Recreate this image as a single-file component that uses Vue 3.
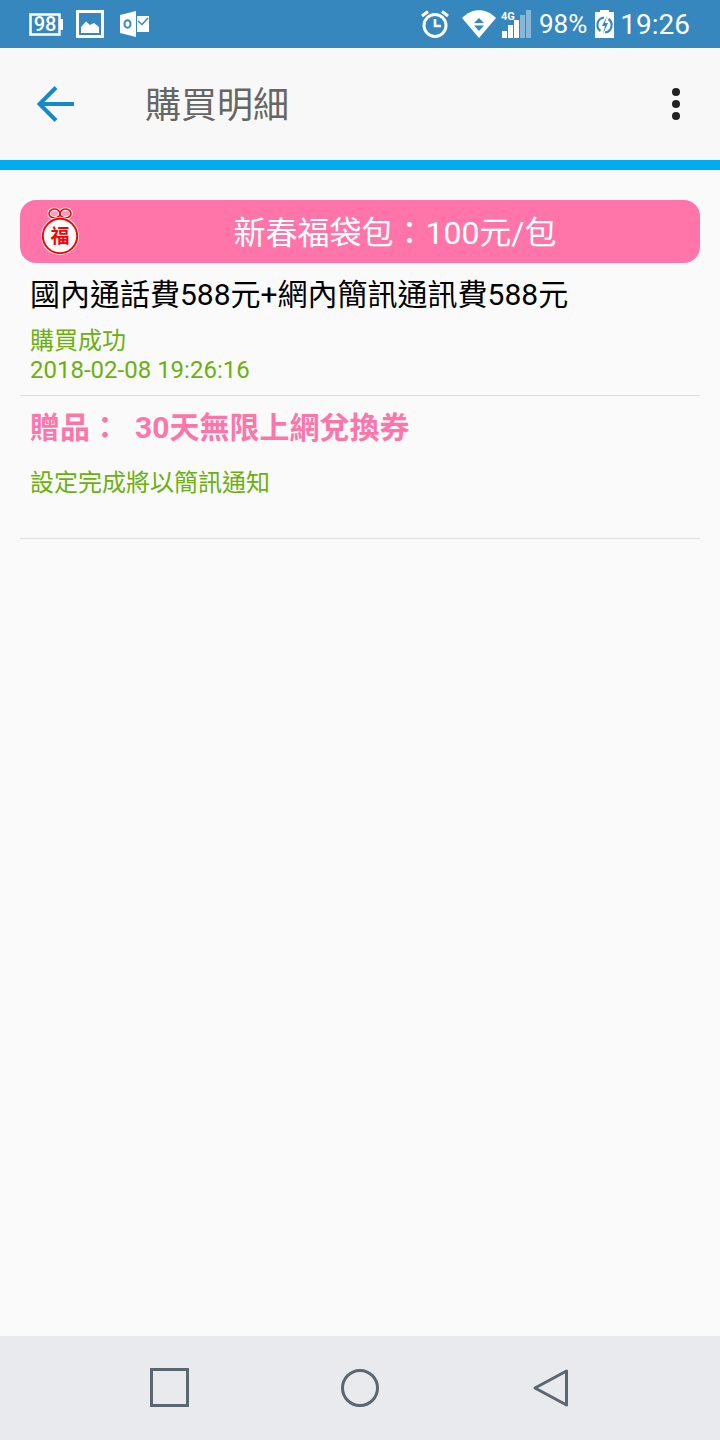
<template>
  <div class="screen">
    <!-- Status bar -->
    <div class="status-bar">
      <div class="status-left">
        <svg class="battery" width="35" height="23" viewBox="0 0 35 23">
          <rect x="1.500" y="1.500" width="29" height="20" fill="none" stroke="#fff" stroke-width="2.500" />
          <rect x="31" y="6" width="3" height="11" fill="#fff" />
          <text x="16" y="18" text-anchor="middle" class="svg-num">98</text>
        </svg>
        <svg class="picture" width="28" height="28" viewBox="0 0 28 28">
          <rect x="1.500" y="1.500" width="25" height="25" fill="none" stroke="#fff" stroke-width="3" />
          <path d="M5 23V17L10 11.500L14 15L18 13L23 17V23Z" fill="#fff" />
        </svg>
        <svg width="29" height="26" viewBox="0 0 29 26">
          <path d="M0 4L16 0V26L0 22Z" fill="#fff" />
          <ellipse cx="7.500" cy="13" rx="3" ry="3.800" fill="none" stroke="#3787bf" stroke-width="2" />
          <rect x="17" y="5" width="12" height="16" fill="#fff" />
          <path d="M18 10L22 13.500L28 7" fill="none" stroke="#3787bf" stroke-width="1.500" />
        </svg>
      </div>
      <div class="status-right">
        <svg class="alarm" width="30" height="30" viewBox="0 0 30 30">
          <circle cx="15" cy="16.500" r="11" fill="none" stroke="#fff" stroke-width="3" />
          <path d="M15 10V17H21" fill="none" stroke="#fff" stroke-width="2.600" />
          <path d="M2 7L8 2.500M28 7L22 2.500" stroke="#fff" stroke-width="3" />
        </svg>
        <svg class="wifi" width="34" height="28" viewBox="0 0 34 28">
          <path d="M0 8C10 -2.500 24 -2.500 34 8L17 28Z" fill="#fff" />
          <path d="M17 8L22 13H12ZM17 21L12 15.500H22Z" fill="#3787bf" />
        </svg>
        <svg class="signal" width="29" height="28" viewBox="0 0 29 28">
          <text x="-1" y="9.500" class="svg-4g">4G</text>
          <rect x="0" y="21" width="5" height="7" fill="#fff" />
          <rect x="6" y="15" width="5" height="13" fill="#fff" />
          <rect x="12" y="10" width="5" height="18" fill="#fff" />
          <rect x="18" y="5" width="5" height="23" fill="#fff" opacity="0.4" />
          <rect x="24" y="0" width="5" height="28" fill="#fff" opacity="0.4" />
        </svg>
        <span class="percent">98%</span>
        <svg class="charge" width="19" height="28" viewBox="0 0 19 28">
          <path d="M5 0H14V2H19V28H0V2H5Z" fill="#fff" />
          <path d="M5.500 21A7.500 7.500 0 0 1 9 7.500M13.500 9A7.500 7.500 0 0 1 10 22.500" fill="none" stroke="#3787bf" stroke-width="2.200" />
          <path d="M12 6L7 16H10L8 24L13 13H10Z" fill="#3787bf" />
        </svg>
        <span class="clock">19:26</span>
      </div>
    </div>

    <!-- App bar -->
    <header class="app-bar">
      <svg class="back" width="38" height="36" viewBox="0 0 38 36">
        <path d="M37 18H3M19 1.500L2.500 18L19 34.500" fill="none" stroke="#148ac8" stroke-width="4" />
      </svg>
      <h1 class="title">購買明細</h1>
      <div class="more">
        <i /><i /><i />
      </div>
    </header>

    <!-- Content -->
    <main class="content">
      <div class="banner">
        <svg class="bag" width="40" height="50" viewBox="0 0 40 50">
          <ellipse cx="14.500" cy="6.500" rx="5.500" ry="4.500" fill="#ff9cc2" stroke="#fff" stroke-width="3.500" />
          <ellipse cx="25.500" cy="6.500" rx="5.500" ry="4.500" fill="#ff9cc2" stroke="#fff" stroke-width="3.500" />
          <ellipse cx="14.500" cy="6.500" rx="5.500" ry="4.500" fill="none" stroke="#ff0000" stroke-width="1.600" />
          <ellipse cx="25.500" cy="6.500" rx="5.500" ry="4.500" fill="none" stroke="#ff0000" stroke-width="1.600" />
          <circle cx="20" cy="29" r="19" fill="#fff" />
          <circle cx="20" cy="29" r="17.200" fill="#fff" stroke="#ff0000" stroke-width="2" />
          <text x="20" y="36" text-anchor="middle" class="svg-fu">福</text>
        </svg>
        <span class="banner-text">新春福袋包：100元/包</span>
      </div>

      <div class="plan">國內通話費588元+網內簡訊通訊費588元</div>
      <div class="state">
        <div>購買成功</div>
        <div class="date">2018-02-08 19:26:16</div>
      </div>

      <div class="gift-box">
        <div class="gift"><span class="gift-label">贈品：</span>30天無限上網兌換券</div>
        <div class="note">設定完成將以簡訊通知</div>
      </div>
    </main>

    <!-- Navigation bar -->
    <nav class="nav-bar">
      <svg width="40" height="40" viewBox="0 0 40 40">
        <rect x="1.500" y="1.500" width="36" height="36" fill="none" stroke="#5b6770" stroke-width="3" />
      </svg>
      <svg width="40" height="40" viewBox="0 0 40 40">
        <circle cx="20" cy="20" r="17.500" fill="none" stroke="#5b6770" stroke-width="3" />
      </svg>
      <svg width="40" height="40" viewBox="0 0 40 40">
        <path d="M36.500 3V37L5 20Z" fill="none" stroke="#5b6770" stroke-width="3" stroke-linejoin="round" />
      </svg>
    </nav>
  </div>
</template>

<script setup>
</script>

<style>
html,
body {
  margin: 0;
  background: #fafafa;
}
</style>

<style scoped>
.screen {
  width: 720px;
  height: 1440px;
  display: flex;
  flex-direction: column;
  background: #fafafa;
  font-family: Roboto, "Noto Sans CJK TC", sans-serif;
  overflow: hidden;
}

.status-bar {
  height: 48px;
  flex: none;
  display: flex;
  align-items: center;
  justify-content: space-between;
  padding: 0 30px 0 29px;
  background: #3787bf;
  color: #fff;
}

.status-left {
  display: flex;
  align-items: center;
}

.battery {
  margin-right: 12px;
}

.picture {
  margin-right: 16px;
}

.status-right {
  display: flex;
  align-items: center;
}

.svg-num {
  font-family: Roboto, sans-serif;
  font-size: 20px;
  font-weight: 500;
  fill: #fff;
}

.svg-4g {
  font-family: Roboto, sans-serif;
  font-size: 11px;
  font-weight: 700;
  fill: #fff;
}

.svg-fu {
  font-family: "Noto Sans CJK TC", sans-serif;
  font-size: 19px;
  font-weight: 700;
  fill: #ff0000;
}

.alarm {
  margin-right: 12px;
}

.wifi {
  margin-right: 6px;
}

.signal {
  margin-right: 8px;
  overflow: visible;
}

.percent {
  font-size: 26px;
  margin-right: 8px;
}

.charge {
  margin-right: 6px;
}

.clock {
  font-size: 28px;
}

.app-bar {
  height: 112px;
  flex: none;
  display: flex;
  align-items: center;
  padding: 0 40px 0 37px;
  background: #f8f8f8;
  border-bottom: 10px solid #00aeef;
}

.back {
  margin-right: 70px;
}

.title {
  margin: 0;
  flex: 1;
  padding-bottom: 4px;
  font-size: 36px;
  font-weight: 400;
  color: #666;
}

.more {
  display: flex;
  flex-direction: column;
  gap: 4px;
}

.more i {
  width: 8px;
  height: 8px;
  border-radius: 50%;
  background: #222;
}

.content {
  flex: 1;
  padding: 30px 20px 0;
}

.banner {
  height: 63px;
  display: flex;
  align-items: center;
  padding-left: 20px;
  border-radius: 16px;
  background: #ff75aa;
}

.bag {
  flex: none;
  margin-top: 1px;
}

.banner-text {
  flex: 1;
  padding: 0 0 4px 10px;
  text-align: center;
  font-size: 32px;
  color: #fff;
}

.plan {
  padding: 11px 10px 0;
  font-size: 30px;
  line-height: 42px;
  color: #000;
}

.state {
  padding: 11px 10px 10px;
  font-size: 24px;
  line-height: 29px;
  color: #6cb010;
  border-bottom: 1px solid #ddd;
}

.gift-box {
  padding: 0 10px 37px;
  border-bottom: 1px solid #ddd;
}

.gift {
  padding-top: 12px;
  font-size: 30px;
  line-height: 40px;
  font-weight: 700;
  color: #ff75aa;
}

.gift-label {
  display: inline-block;
  width: 105px;
}

.note {
  padding-top: 17px;
  font-size: 24px;
  line-height: 36px;
  color: #6cb010;
}

.nav-bar {
  height: 104px;
  flex: none;
  display: flex;
  align-items: center;
  justify-content: center;
  gap: 150px;
  background: #e9eaee;
}
</style>
